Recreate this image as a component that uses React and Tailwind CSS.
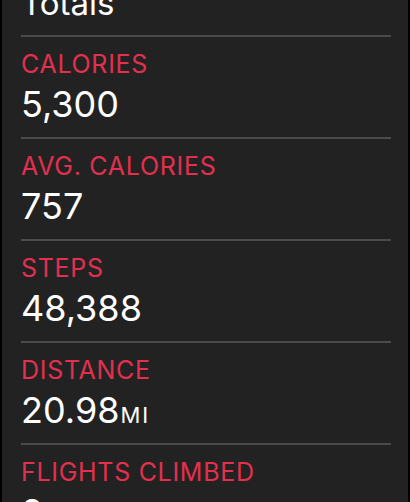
import React from 'react';

const stats = [
  { label: 'CALORIES', value: '5,300' },
  { label: 'AVG. CALORIES', value: '757' },
  { label: 'STEPS', value: '48,388' },
  { label: 'DISTANCE', value: '20.98', unit: 'MI' },
  { label: 'FLIGHTS CLIMBED', value: '8' },
];

const StatRow = ({ stat }) => (
  <div>
    <div className="h-[2px] bg-[#4b4b4b]" />
    <div className="pt-[13px] pb-[13px]">
      <p className="text-[25px] leading-[29px] tracking-[0.7px] text-[#e2304e]">{stat.label}</p>
      <p className="mt-[5px] h-[40px] text-[36px] leading-[40px] text-white">
        {stat.value}
        {stat.unit && (
          <span className="ml-[1px] text-[22px] leading-none tracking-[2px]">{stat.unit}</span>
        )}
      </p>
    </div>
  </div>
);

export default function App() {
  return (
    <div
      className="h-[502px] w-[410px] overflow-hidden bg-black pl-[2px] pr-[2px]"
      style={{ fontFamily: 'Inter, "Noto Sans", sans-serif' }}
    >
      <div className="h-full overflow-hidden bg-[#222222] pl-[19px] pr-[17px]">
        <h1 className="mt-[-17px] pb-[12px] text-[33px] leading-[40px] text-white">Totals</h1>
        {stats.map((stat) => (
          <StatRow key={stat.label} stat={stat} />
        ))}
      </div>
    </div>
  );
}
